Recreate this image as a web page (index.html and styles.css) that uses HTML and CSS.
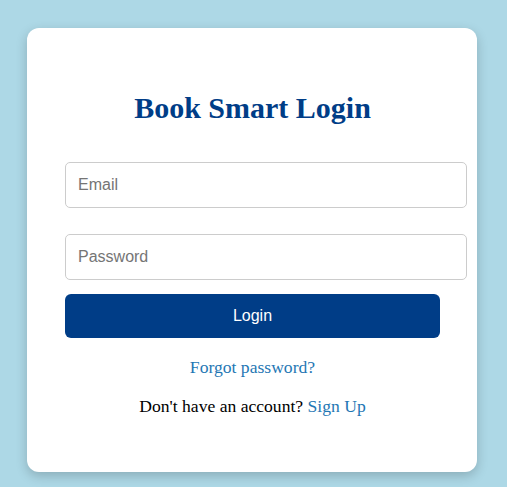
FILE: index.html
```html
<!DOCTYPE html>
<html lang="en">
<head>
<meta charset="utf-8">
<title>Book Smart Login</title>
<link rel="stylesheet" href="styles.css">
</head>
<body>
  <main class="card">
    <h1 class="title">Book Smart Login</h1>
    <form class="form">
      <input class="field field-email" type="email" placeholder="Email">
      <input class="field field-password" type="password" placeholder="Password">
      <button class="btn" type="button">Login</button>
    </form>
    <p class="forgot"><a class="link" href="#">Forgot password?</a></p>
    <p class="signup">Don't have an account? <a class="link" href="#">Sign Up</a></p>
  </main>
</body>
</html>
```
FILE: styles.css
```css
html, body {
  margin: 0;
  padding: 0;
}
body {
  background: #add8e6;
  font-family: "Liberation Serif", "Times New Roman", serif;
  color: #000;
  display: flex;
  flex-direction: column;
  align-items: flex-start;
  padding: 28px 0 0 27px;
  min-height: 100vh;
  box-sizing: border-box;
}
.card {
  width: 450px;
  box-sizing: border-box;
  background: #fff;
  border-radius: 12px;
  box-shadow: 0 4px 12px rgba(0, 0, 0, 0.2);
  padding: 0 37px 56px 38px;
  display: flex;
  flex-direction: column;
  align-items: stretch;
}
.title {
  margin: 63px 0 37px;
  font-size: 30px;
  line-height: 34px;
  font-weight: bold;
  text-align: center;
  color: #003d87;
}
.form {
  display: flex;
  flex-direction: column;
  align-items: flex-start;
  margin: 0;
}
.field {
  width: 402px;
  height: 46px;
  box-sizing: border-box;
  padding: 0 12px;
  border: 1px solid #ccc;
  border-radius: 5px;
  font-family: "Liberation Sans", Arial, sans-serif;
  font-size: 16px;
  color: #333;
  background: #fff;
  outline: none;
}
.field::placeholder {
  color: #757575;
}
.field-password {
  margin-top: 26px;
}
.btn {
  margin-top: 14px;
  width: 375px;
  height: 44px;
  border: none;
  border-radius: 6px;
  background: #003d87;
  color: #fff;
  font-family: "Liberation Sans", Arial, sans-serif;
  font-size: 16px;
  cursor: pointer;
}
.forgot,
.signup {
  margin: 19px 0 0;
  font-size: 17.6px;
  line-height: 20px;
  text-align: center;
}
.link {
  color: #1f77b4;
  text-decoration: none;
}
```
